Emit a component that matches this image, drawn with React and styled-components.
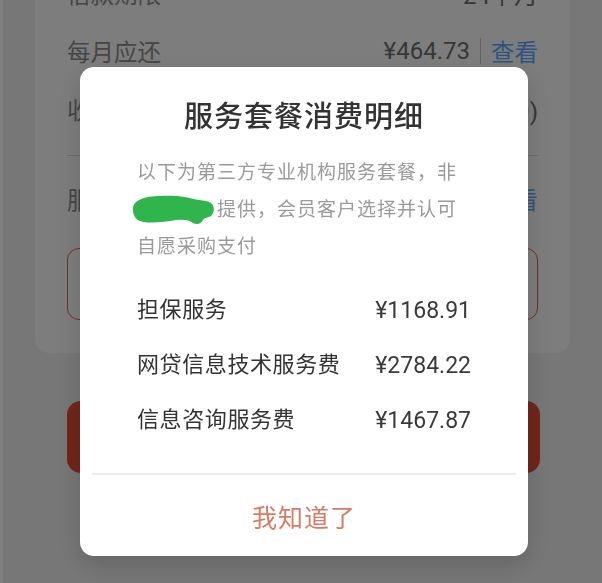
import React from "react";
import styled, { createGlobalStyle } from "styled-components";

const GlobalStyle = createGlobalStyle`
  html, body {
    margin: 0;
    padding: 0;
    height: 100%;
    overflow: hidden;
  }
  body {
    background: #eeeeee;
    border-left: 3px solid #ffffff;
    font-family: "Noto Sans CJK SC", "Noto Sans", sans-serif;
  }
`;

const Page = styled.div`
  padding: 0 32px;
`;

const Card = styled.div`
  margin-top: -36px;
  background: #fafafa;
  border-radius: 14px;
  padding: 0 32px 33px;
`;

const InfoRow = styled.div`
  height: 58px;
  display: flex;
  align-items: center;
  justify-content: space-between;
  margin-top: ${(p) => p.$gap || 0}px;
  font-size: 23.5px;
`;

const Label = styled.span`
  color: #8c8c8c;
`;

const Value = styled.span`
  display: flex;
  align-items: center;
  gap: 10px;
  color: #6e6e6e;
  font-family: Roboto, "Noto Sans CJK SC", sans-serif;
  font-size: 24px;
`;

const Sep = styled.i`
  width: 1px;
  height: 26px;
  background: #c4c4c4;
`;

const Link = styled.span`
  color: #5aa8ff;
  font-family: "Noto Sans CJK SC", sans-serif;
  font-size: 23.5px;
`;

const Divider = styled.div`
  height: 1px;
  background: #d6d6d6;
  margin-top: 17px;
`;

const InputBox = styled.div`
  margin-top: 20px;
  height: 70px;
  border: 1px solid #d8604e;
  border-radius: 12px;
`;

const MainButton = styled.div`
  margin: 48px 30px 0 32px;
  height: 72px;
  border-radius: 14px;
  background: #e04c34;
`;

const Overlay = styled.div`
  position: fixed;
  inset: 0;
  background: rgba(0, 0, 0, 0.5);
  display: flex;
  justify-content: center;
  align-items: flex-start;
  padding: 67px 0 0 6px;
`;

const Dialog = styled.div`
  width: 448px;
  background: #fff;
  border-radius: 14px;
  box-shadow: 0 8px 24px rgba(0, 0, 0, 0.15);
  display: flex;
  flex-direction: column;
`;

const Body = styled.div`
  padding: 27px 57px 29px 57px;
`;

const Title = styled.h2`
  margin: 0;
  text-align: center;
  font-size: 29px;
  line-height: 40px;
  font-weight: 500;
  letter-spacing: 1px;
  color: #333;
`;

const Desc = styled.p`
  margin: 18px 0 0;
  font-size: 19px;
  line-height: 37px;
  letter-spacing: 1px;
  color: #9a9a9a;
`;

const Blot = styled.svg`
  width: 84px;
  height: 32px;
  vertical-align: -10px;
  margin-left: -6px;
  margin-right: 2px;
`;

const Items = styled.div`
  margin-top: 16px;
`;

const Item = styled.div`
  height: 55px;
  display: flex;
  align-items: center;
  justify-content: space-between;
  font-size: 22px;
  color: #333;
`;

const ItemName = styled.span`
  letter-spacing: 0.6px;
`;

const Amount = styled.span`
  margin-top: 7px;
  font-family: Roboto, "Noto Sans CJK SC", sans-serif;
  font-size: 23px;
  color: #3a3a3a;
`;

const Footer = styled.div`
  margin: 0 12px;
  border-top: 2px solid #ececec;
  height: 81px;
  display: flex;
  align-items: center;
  justify-content: center;
  font-size: 25px;
  letter-spacing: 1px;
  color: #d97a66;
`;

const items = [
  ["担保服务", "¥1168.91"],
  ["网贷信息技术服务费", "¥2784.22"],
  ["信息咨询服务费", "¥1467.87"],
];

export default function App() {
  return (
    <>
      <GlobalStyle />
      <Page>
        <Card>
          <InfoRow>
            <Label>借款期限</Label>
            <Value>24个月</Value>
          </InfoRow>
          <InfoRow>
            <Label>每月应还</Label>
            <Value>
              ¥464.73
              <Sep />
              <Link>查看</Link>
            </Value>
          </InfoRow>
          <InfoRow>
            <Label>收款账户</Label>
            <Value>招商银行(尾号6789)</Value>
          </InfoRow>
          <Divider />
          <InfoRow $gap={14}>
            <Label>服务套餐</Label>
            <Value>
              <Link>查看</Link>
            </Value>
          </InfoRow>
          <InputBox />
        </Card>
        <MainButton />
      </Page>

      <Overlay>
        <Dialog>
          <Body>
            <Title>服务套餐消费明细</Title>
            <Desc>
              以下为第三方专业机构服务套餐，非
              <Blot viewBox="0 0 84 32">
                <path
                  d="M2 15 C2 6 14 2 29 2 C44 1 55 3 63 5 C71 7 77 6 81 10 C84 14 83 19 80 22 C77 24 74 23 72 26 C70 30 66 31 62 29 C59 26 53 25 45 26 C33 28 18 30 9 27 C4 25 2 21 2 15 Z"
                  fill="#2fb54c"
                />
              </Blot>
              提供，会员客户选择并认可自愿采购支付
            </Desc>
            <Items>
              {items.map(([name, amount]) => (
                <Item key={name}>
                  <ItemName>{name}</ItemName>
                  <Amount>{amount}</Amount>
                </Item>
              ))}
            </Items>
          </Body>
          <Footer>我知道了</Footer>
        </Dialog>
      </Overlay>
    </>
  );
}
